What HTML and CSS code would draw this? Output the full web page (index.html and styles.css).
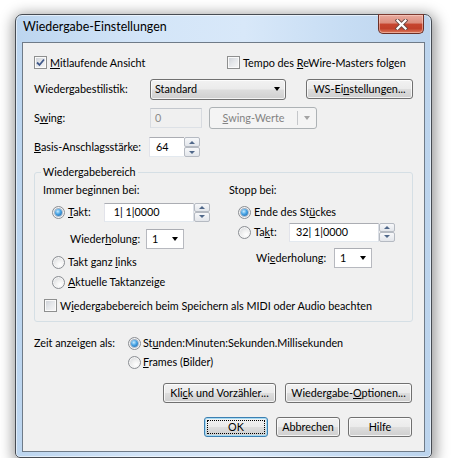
FILE: index.html
```html
<!DOCTYPE html>
<html lang="de">
<head>
  <meta charset="UTF-8">
  <title>Wiedergabe-Einstellungen</title>
  <link rel="stylesheet" href="styles.css">
</head>
<body>

  <div class="window">
    <div class="titlebar">
      <span class="title">Wiedergabe-Einstellungen</span>
      <span class="close-btn">
        <svg width="13" height="11" viewBox="0 0 13 11">
          <path d="M2.5 1.5 L10.5 9.5 M10.5 1.5 L2.5 9.5" stroke="#6a4a44" stroke-width="4" stroke-linecap="square" fill="none"/>
          <path d="M2.5 1.5 L10.5 9.5 M10.5 1.5 L2.5 9.5" stroke="#ffffff" stroke-width="2.2" stroke-linecap="square" fill="none"/>
        </svg>
      </span>
    </div>

    <div class="client">
      <!-- top checkboxes -->
      <div class="row row-checks">
        <div class="opt opt-first">
          <span class="check">
            <svg width="9" height="9" viewBox="0 0 9 9"><path d="M1 4.5 L3.5 7 L8 1.5" stroke="#40598a" stroke-width="1.8" fill="none"/></svg>
          </span>
          <span><u>M</u>itlaufende Ansicht</span>
        </div>
        <div class="opt">
          <span class="check"></span>
          <span>Tempo des <u>R</u>eWire-Masters folgen</span>
        </div>
      </div>

      <div class="row row-field">
        <span class="field-label">Wiedergabestilistik:</span>
        <div class="combo-btn">
          <span>Standard</span>
          <span class="arrow"></span>
        </div>
        <button class="btn btn-ws">WS-Ei<u>n</u>stellungen...</button>
      </div>

      <div class="row row-field">
        <span class="field-label">S<u>w</u>ing:</span>
        <div class="edit edit-disabled edit-swing">0</div>
        <div class="split-btn">
          <span class="split-main"><u>S</u>wing-Werte</span>
          <span class="split-drop"><span class="arrow arrow-gray"></span></span>
        </div>
      </div>

      <div class="row row-field">
        <span class="field-label basis-label"><u>B</u>asis-Anschlagsstärke:</span>
        <div class="spinbox">
          <div class="edit edit-basis">64</div>
          <div class="spin">
            <span class="spin-half"><span class="tri-up"></span></span>
            <span class="spin-half"><span class="tri-down"></span></span>
          </div>
        </div>
      </div>

      <!-- playback range -->
      <fieldset class="group">
        <legend>Wiedergabebereich</legend>
        <div class="group-cols">
          <div class="group-col col-left">
            <div class="g-head">Immer beginnen bei:</div>
            <div class="g-row takt-row">
              <div class="opt radio-label">
                <span class="radio on"></span>
                <span><u>T</u>akt:</span>
              </div>
              <div class="spinbox">
                <div class="edit edit-bar"> 1| 1|0000</div>
                <div class="spin">
                  <span class="spin-half"><span class="tri-up"></span></span>
                  <span class="spin-half"><span class="tri-down"></span></span>
                </div>
              </div>
            </div>
            <div class="g-row wdh-row">
              <span class="wdh-label">Wieder<u>h</u>olung:</span>
              <div class="combo-edit"><span>1</span><span class="arrow"></span></div>
            </div>
            <div class="opt g-radio first-radio">
              <span class="radio"></span>
              <span>Takt ganz <u>l</u>inks</span>
            </div>
            <div class="opt g-radio">
              <span class="radio"></span>
              <span><u>A</u>ktuelle Taktanzeige</span>
            </div>
          </div>

          <div class="group-col col-right">
            <div class="g-head">Stopp bei:</div>
            <div class="opt g-radio ende-row">
              <span class="radio on"></span>
              <span>Ende des St<u>ü</u>ckes</span>
            </div>
            <div class="g-row takt-row-right">
              <div class="opt radio-label radio-label-right">
                <span class="radio"></span>
                <span>Ta<u>k</u>t:</span>
              </div>
              <div class="spinbox">
                <div class="edit edit-bar">32| 1|0000</div>
                <div class="spin">
                  <span class="spin-half"><span class="tri-up"></span></span>
                  <span class="spin-half"><span class="tri-down"></span></span>
                </div>
              </div>
            </div>
            <div class="g-row wdh-row wdh-right">
              <span class="wdh-label">Wi<u>e</u>derholung:</span>
              <div class="combo-edit"><span>1</span><span class="arrow"></span></div>
            </div>
          </div>
        </div>

        <div class="opt save-row">
          <span class="check"></span>
          <span>W<u>i</u>edergabebereich beim Speichern als MIDI oder Audio beachten</span>
        </div>
      </fieldset>

      <div class="row time-row">
        <span class="time-label">Zeit anzeigen als:</span>
        <div class="time-opts">
          <div class="opt">
            <span class="radio on"></span>
            <span>St<u>u</u>nden:Minuten:Sekunden.Millisekunden</span>
          </div>
          <div class="opt">
            <span class="radio"></span>
            <span><u>F</u>rames (Bilder)</span>
          </div>
        </div>
      </div>

      <div class="row btn-row">
        <button class="btn btn-click">Kli<u>c</u>k und Vorzähler...</button>
        <button class="btn btn-options">Wiedergabe-<u>O</u>ptionen...</button>
      </div>

      <div class="row btn-row">
        <button class="btn btn-small btn-default"><span class="focus-rect">OK</span></button>
        <button class="btn btn-small">Abbrechen</button>
        <button class="btn btn-small">Hilfe</button>
      </div>
    </div>
  </div>

</body>
</html>
```
FILE: styles.css
```css
* {
  box-sizing: border-box;
}
body {
  margin: 0;
  padding: 14px 0 0 15px;
  background: #ffffff;
  color: #000;
  font-family: Lato, "Open Sans", sans-serif;
  font-size: 10.8px;
  line-height: 14px;
}
u {
  text-decoration: underline;
  text-underline-offset: 1px;
}

/* window frame */
.window {
  width: 417px;
  height: 444px;
  border: 1px solid #474c53;
  border-radius: 7px 7px 5px 5px;
  background: linear-gradient(90deg, #bcd5ef 0%, #d3e5f8 30%, #d8e8f9 55%, #c6dcf3 80%, #bcd4ed 100%);
  box-shadow: 1px 3px 14px 3px rgba(0, 0, 0, 0.4), inset 0 0 0 1px rgba(255, 255, 255, 0.55);
  padding: 0 6px 5px 6px;
  display: flex;
  flex-direction: column;
}
.titlebar {
  height: 27px;
  display: flex;
  align-items: flex-start;
}
.title {
  padding: 4px 0 0 1px;
  font-size: 12.4px;
  line-height: 16px;
}
.close-btn {
  margin: -1px 1px 0 auto;
  width: 46px;
  height: 20px;
  border: 1px solid #6b3027;
  border-top-color: #7b3a30;
  border-radius: 0 0 5px 5px;
  background: linear-gradient(#e9aa9e 0%, #dc8c7c 45%, #c6452f 50%, #c1402a 75%, #dc7a5c 100%);
  box-shadow: inset 0 0 0 1px rgba(255, 220, 210, 0.5);
  display: flex;
  align-items: center;
  justify-content: center;
}
.client {
  flex: 1;
  background: #f0f0f0;
  border: 1px solid #6f7b88;
  padding: 0 11px;
  display: flex;
  flex-direction: column;
}

/* generic rows */
.row {
  display: flex;
  align-items: center;
}
.row-checks {
  margin-top: 13px;
  height: 13px;
}
.row-field {
  margin-top: 7px;
  height: 22px;
}
.row-checks + .row-field {
  margin-top: 9px;
}
.field-label {
  width: 116px;
  flex: none;
}
.basis-label {
  width: 115px;
}
.opt {
  display: flex;
  align-items: center;
  gap: 3px;
  white-space: nowrap;
}
.opt-first {
  width: 193px;
}

/* checkbox */
.check {
  width: 13px;
  height: 13px;
  flex: none;
  border: 1px solid #8e8f8f;
  background: linear-gradient(135deg, #cbcfd5 0%, #e6e8eb 50%, #f7f7f7 100%);
  box-shadow: inset 0 0 0 1px #fafafa;
  display: flex;
  align-items: center;
  justify-content: center;
}

/* radio */
.radio {
  width: 13px;
  height: 13px;
  flex: none;
  border-radius: 50%;
  border: 1px solid #8b8e93;
  background: radial-gradient(circle at 65% 70%, #ffffff 0%, #f0f0f0 40%, #cfd2d6 100%);
  box-shadow: inset 0 0 0 1px #f6f6f6;
  display: flex;
  align-items: center;
  justify-content: center;
}
.radio.on::after {
  content: "";
  width: 7px;
  height: 7px;
  border-radius: 50%;
  background: radial-gradient(circle at 40% 35%, #c9ecff 0%, #45a2e4 45%, #1d5b9a 100%);
  box-shadow: 0 0 0 1px rgba(40, 80, 130, 0.35);
}

/* text fields */
.edit {
  height: 20px;
  border: 1px solid;
  border-color: #abadb3 #dbdfe6 #e3e9ef #e2e3ea;
  background: #fff;
  padding: 0 4px;
  display: flex;
  align-items: center;
  white-space: pre;
}
.edit-swing {
  width: 52px;
}
.edit-disabled {
  background: #f0f0f0;
  border-color: #c2c6cc #d8dbe0 #dde1e6 #d8dbe0;
  color: #8a8a8a;
}
.edit-basis {
  width: 35px;
  border-right: none;
  padding-left: 6px;
}
.edit-bar {
  width: 90px;
  height: 19px;
  padding-left: 6px;
}
.spinbox {
  display: flex;
  align-items: stretch;
}
.spin {
  width: 16px;
  display: flex;
  flex-direction: column;
}
.spin-half {
  flex: 1;
  border: 1px solid #b5bac2;
  border-radius: 2px;
  background: linear-gradient(#f7f8fa, #e3e6eb);
  display: flex;
  align-items: center;
  justify-content: center;
}
.tri-up {
  border-left: 3px solid transparent;
  border-right: 3px solid transparent;
  border-bottom: 3px solid #50688a;
}
.tri-down {
  border-left: 3px solid transparent;
  border-right: 3px solid transparent;
  border-top: 3px solid #50688a;
}

/* combo boxes */
.arrow {
  width: 0;
  height: 0;
  border-left: 3.5px solid transparent;
  border-right: 3.5px solid transparent;
  border-top: 4px solid #000;
}
.arrow-gray {
  border-top-color: #a3a3a3;
}
.combo-btn {
  width: 136px;
  height: 21px;
  border: 1px solid #707070;
  border-radius: 3px;
  background: linear-gradient(#f2f2f2 0%, #ebebeb 48%, #dddddd 52%, #cfcfcf 100%);
  box-shadow: inset 0 0 0 1px rgba(255, 255, 255, 0.75);
  padding: 0 5px 0 4px;
  display: flex;
  align-items: center;
  justify-content: space-between;
}
.combo-edit {
  width: 38px;
  height: 20px;
  border: 1px solid #b7b9bf;
  border-top-color: #abadb3;
  background: #fff;
  padding: 0 5px 0 5px;
  display: flex;
  align-items: center;
  justify-content: space-between;
}

/* buttons */
.btn {
  height: 20px;
  border: 1px solid #707070;
  border-radius: 3px;
  background: linear-gradient(#f2f2f2 0%, #ebebeb 48%, #dddddd 52%, #cfcfcf 100%);
  box-shadow: inset 0 0 0 1px rgba(255, 255, 255, 0.75);
  font: inherit;
  color: #000;
  padding: 0;
  white-space: nowrap;
}
.btn-ws {
  width: 107px;
  margin-left: 20px;
}
.split-btn {
  width: 108px;
  height: 22px;
  margin-left: 7px;
  border: 1px solid #adb2b5;
  border-radius: 3px;
  background: #f4f4f4;
  color: #838383;
  display: flex;
  align-items: center;
}
.split-main {
  flex: 1;
  text-align: center;
}
.split-drop {
  width: 19px;
  height: 14px;
  border-left: 1px solid #c5c7ca;
  display: flex;
  align-items: center;
  justify-content: center;
}

/* group box */
.group {
  margin: 7px 0 0 0;
  padding: 4px 8px 9px 8px;
  border: 1px solid #d5dfe5;
  border-radius: 3px;
}
.group legend {
  padding: 0 2px;
  margin-left: -2px;
  line-height: 14px;
}
.group-cols {
  display: flex;
}
.col-left {
  width: 186px;
}
.g-head {
  height: 14px;
}
.g-row {
  display: flex;
  align-items: center;
  height: 20px;
}
.takt-row {
  margin: 5px 0 0 9px;
}
.radio-label {
  width: 52px;
}
.radio-label-right {
  width: 51px;
}
.wdh-row {
  margin: 7px 0 0 27px;
}
.wdh-label {
  width: 76px;
}
.wdh-right {
  margin-top: 6px;
}
.wdh-right .wdh-label {
  width: 78px;
}
.g-radio {
  height: 14px;
  margin: 6px 0 0 9px;
}
.ende-row {
  margin-top: 8px;
}
.takt-row-right {
  margin: 3px 0 0 9px;
}
.save-row {
  margin: 10px 0 0 1px;
  height: 13px;
}

/* time format */
.time-row {
  margin-top: 14px;
  align-items: flex-start;
}
.time-label {
  width: 94px;
}
.time-opts {
  display: flex;
  flex-direction: column;
  gap: 5px;
}
.time-opts .opt {
  height: 14px;
  gap: 2px;
}

/* bottom buttons */
.btn-row {
  margin-top: 14px;
  justify-content: flex-end;
  gap: 9px;
  padding-right: 1px;
}
.btn-click {
  width: 113px;
}
.btn-options {
  width: 127px;
}
.btn-small {
  width: 64px;
}
.btn-row + .btn-row {
  gap: 8px;
}
.btn-default {
  border-color: #3c7fb1;
  box-shadow: inset 0 0 0 1px #a6dbf4;
  padding: 2px;
  display: flex;
}
.focus-rect {
  flex: 1;
  border: 1px dotted #000;
  display: flex;
  align-items: center;
  justify-content: center;
}
```
